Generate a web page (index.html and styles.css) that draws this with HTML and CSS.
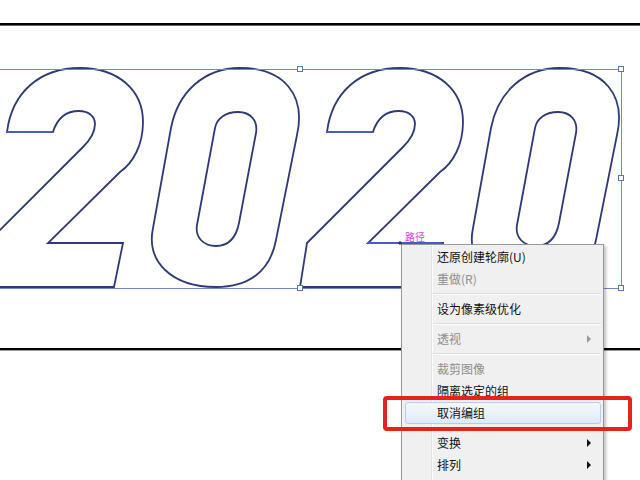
FILE: index.html
```html
<!DOCTYPE html>
<html lang="zh-CN">
<head>
    <meta charset="UTF-8">
    <title>2020 - 取消编组</title>
    <link rel="stylesheet" href="styles.css">
</head>
<body>
    <div class="board">
        <svg class="art" width="640" height="480" viewBox="0 0 640 480">
            <defs>
                <path id="two" d="M 7,132 C 12,92 40,68 80,68 C 118,68 143,90 143,122 C 143,145 133,163 120,172 L 48,243 L 123,243 L 114,287 L -20,287 L -13,243 L 83,147 C 90,140 95,132 95,124 C 95,116 88,111 79,111 C 66,111 57,119 53,132 Z"/>
                <path id="zero" d="M 240,68 C 284,68 306,95 297,135 L 276,240 C 270,272 248,287 216,287 C 172,287 146,262 153,228 L 171,128 C 178,92 204,68 240,68 Z M 238,112 C 251,112 258,121 256,133 L 239,223 C 236,238 228,246 216,246 C 203,246 195,237 197,225 L 215,128 C 217,118 226,112 238,112 Z"/>
            </defs>

            <rect class="rule" x="0" y="23" width="640" height="2.6"/>
            <rect class="rule" x="0" y="348" width="640" height="2.4"/>

            <!-- outlined text -->
            <g class="glyphs">
                <use href="#two"/>
                <use href="#zero"/>
                <use href="#two" x="320"/>
                <use href="#zero" x="320"/>
            </g>
            <line class="segment" x1="7" y1="132" x2="53" y2="132"/>
            <line class="segment" x1="327" y1="132" x2="373" y2="132"/>
            <line class="segment" x1="367" y1="243" x2="442" y2="243"/>

            <!-- selection box -->
            <rect class="bounds" x="-10.5" y="69.5" width="632" height="219"/>
            <g class="handles">
                <rect x="297.5" y="66.5" width="5" height="5"/>
                <rect x="618.5" y="66.5" width="5" height="5"/>
                <rect x="618.5" y="175.5" width="5" height="5"/>
                <rect x="618.5" y="285.5" width="5" height="5"/>
                <rect x="297.5" y="285.5" width="5" height="5"/>
            </g>
            <path class="anchor" d="M 398,243 L 402,243 M 400,241 L 400,245"/>
        </svg>

        <span class="hint">路径</span>

        <div class="menu">
            <div class="item">还原创建轮廓(U)</div>
            <div class="item off">重做(R)</div>
            <div class="sep"></div>
            <div class="item">设为像素级优化</div>
            <div class="sep"></div>
            <div class="item off sub">透视</div>
            <div class="sep"></div>
            <div class="item off">裁剪图像</div>
            <div class="item">隔离选定的组</div>
            <div class="item active">取消编组</div>
            <div class="sep"></div>
            <div class="item sub">变换</div>
            <div class="item sub">排列</div>
        </div>

        <div class="callout"></div>
    </div>
</body>
</html>
```

FILE: styles.css
```css
/* Page */
body {
    margin: 0;
    background: #fff;
    overflow: hidden;
}

.board {
    position: relative;
    width: 640px;
    height: 480px;
    overflow: hidden;
    background: #fff;
}

.art {
    display: block;
}

/* Artwork */
.rule {
    fill: #000;
}

.glyphs use {
    fill: none;
    stroke: #2f3978;
    stroke-width: 1.8;
}

.segment {
    stroke: #4a5cc8;
    stroke-width: 2;
}

.bounds {
    fill: none;
    stroke: #6d8cc4;
    stroke-width: 1;
}

.handles rect {
    fill: #fff;
    stroke: #5577b8;
    stroke-width: 1;
}

.anchor {
    stroke: #222;
    stroke-width: 1;
}

.hint {
    position: absolute;
    left: 405px;
    top: 230px;
    font-family: "Noto Sans CJK SC", sans-serif;
    font-size: 10px;
    line-height: 14px;
    color: #e03ce6;
}

/* Context menu */
.menu {
    position: absolute;
    left: 401px;
    top: 244px;
    width: 203px;
    box-sizing: border-box;
    padding: 1px 2px 10px 3px;
    background: #f0f0f0;
    border: 1px solid #979797;
    box-shadow: 2px 2px 3px rgba(0, 0, 0, 0.25);
    font-family: "Noto Sans CJK SC", "Microsoft YaHei", sans-serif;
    font-size: 12px;
    color: #111;
}

.menu::before {
    content: "";
    position: absolute;
    top: 0;
    bottom: 0;
    left: 29px;
    width: 1px;
    background: #e2e3e3;
    box-shadow: 1px 0 0 #fff;
}

.item {
    position: relative;
    display: flex;
    align-items: center;
    height: 20px;
    line-height: 20px;
    padding: 0 9px 0 31px;
    border: 1px solid transparent;
    border-radius: 3px;
}

.item.off {
    color: #8e8e8e;
}

.item.sub::after {
    content: "";
    margin-left: auto;
    border-left: 4px solid #111;
    border-top: 4px solid transparent;
    border-bottom: 4px solid transparent;
}

.item.off.sub::after {
    border-left-color: #9a9a9a;
}

.item.active {
    background: linear-gradient(#f4f8fd, #dfeaf8);
    border-color: #b3cdef;
}

.sep {
    height: 0;
    margin: 3px 0 3px 27px;
    border-top: 1px solid #dcdcdc;
    border-bottom: 1px solid #fff;
}

/* Red annotation */
.callout {
    position: absolute;
    left: 383px;
    top: 396px;
    width: 249px;
    height: 35px;
    box-sizing: border-box;
    border: 4px solid #e8211c;
    border-radius: 4px;
}
```
